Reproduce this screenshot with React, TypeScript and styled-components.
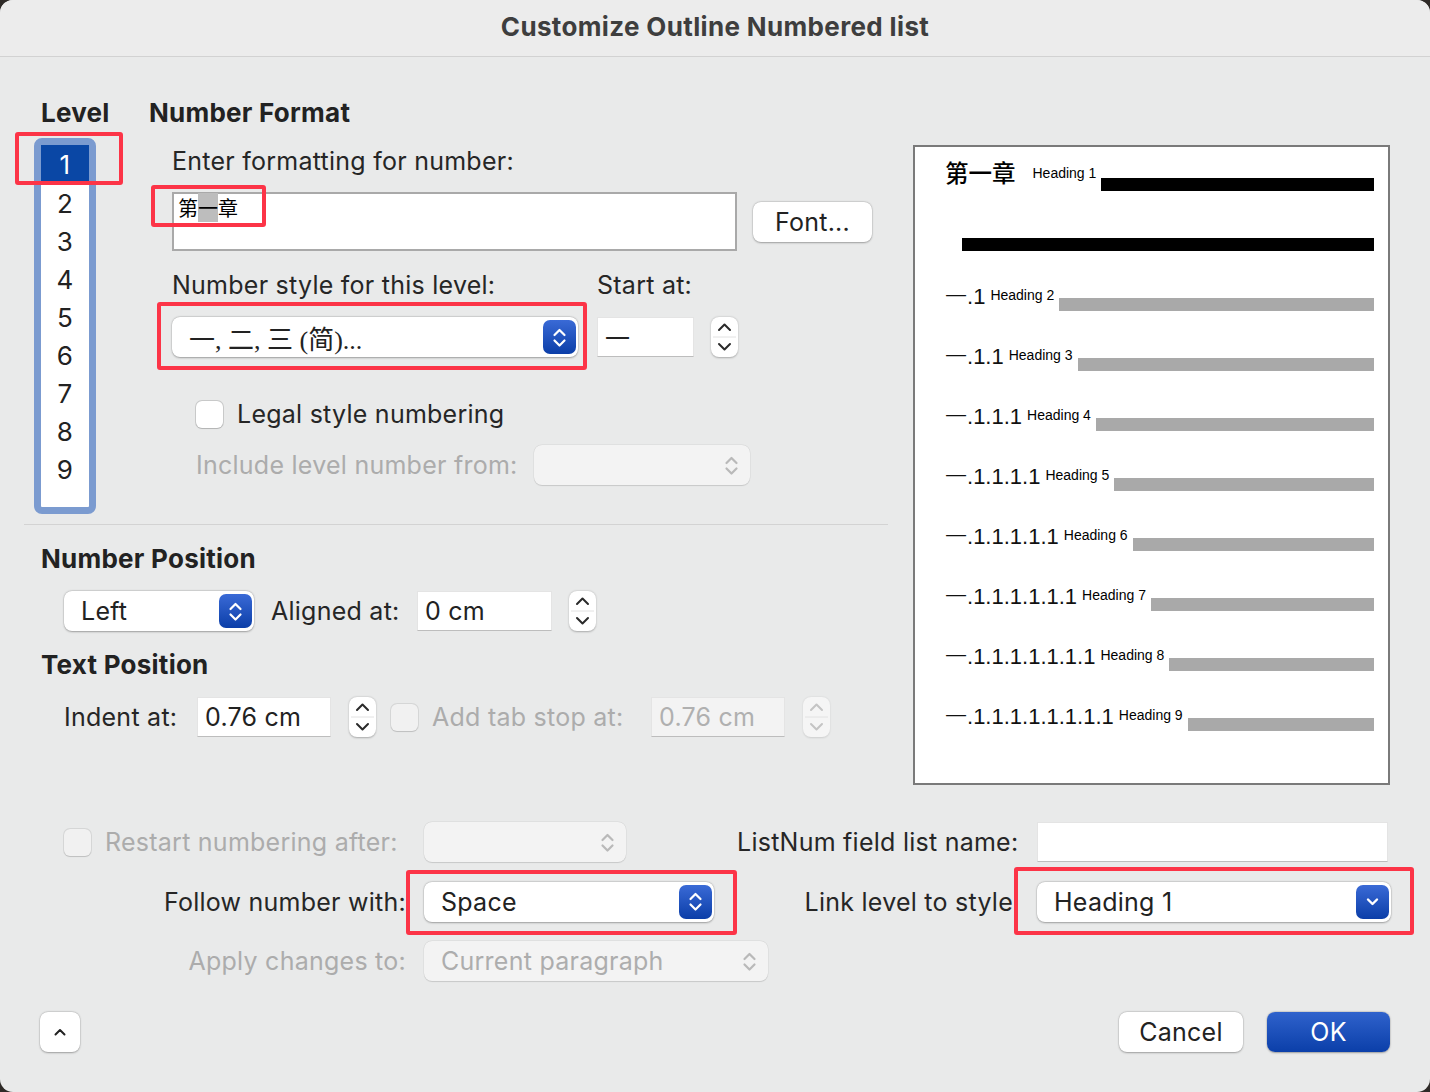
import React from 'react';
import styled, { createGlobalStyle, css } from 'styled-components';

const GlobalStyle = createGlobalStyle`
  html, body {
    margin: 0;
    padding: 0;
    background: #2e2a27;
  }
  body {
    font-family: Inter, "Noto Sans CJK SC", sans-serif;
    letter-spacing: 0.25px;
    color: #262626;
  }
  * {
    box-sizing: border-box;
  }
`;

const levels = [1, 2, 3, 4, 5, 6, 7, 8, 9];

const previewRows = [2, 3, 4, 5, 6, 7, 8, 9].map(n => ({
  level: n,
  number: '一' + '.1'.repeat(n - 1),
}));

const annotations = [
  { x: 15, y: 132, w: 108, h: 53 },
  { x: 151, y: 185, w: 115, h: 42 },
  { x: 157, y: 302, w: 430, h: 68 },
  { x: 406, y: 870, w: 331, h: 65 },
  { x: 1014, y: 867, w: 400, h: 68 },
];

const UpDown: React.FC<{ color: string; }> = ({ color }) => (
  <svg width='33' height='33' viewBox='0 0 33 33'>
    <polyline points='11.5,14 16.5,9 21.5,14' fill='none' stroke={color} strokeWidth='2.2' strokeLinecap='round' strokeLinejoin='round' />
    <polyline points='11.5,19.5 16.5,24.5 21.5,19.5' fill='none' stroke={color} strokeWidth='2.2' strokeLinecap='round' strokeLinejoin='round' />
  </svg>
);

const Down: React.FC = () => (
  <svg width='33' height='33' viewBox='0 0 33 33'>
    <polyline points='12,14.5 16.5,19 21,14.5' fill='none' stroke='#fff' strokeWidth='2.4' strokeLinecap='round' strokeLinejoin='round' />
  </svg>
);

const StepArrows: React.FC<{ disabled?: boolean; }> = ({ disabled }) => {
  const color = disabled ? '#c4c4c4' : '#2a2a2a';
  return (
    <svg width='27' height='40' viewBox='0 0 27 40'>
      <polyline points='8,13 13.5,7.5 19,13' fill='none' stroke={color} strokeWidth='2' strokeLinecap='round' strokeLinejoin='round' />
      <line x1='2' y1='20' x2='25' y2='20' stroke='#e2e2e2' strokeWidth='1' />
      <polyline points='8,27 13.5,32.5 19,27' fill='none' stroke={color} strokeWidth='2' strokeLinecap='round' strokeLinejoin='round' />
    </svg>
  );
};

type SelectProps = {
  width: number;
  value?: string;
  disabled?: boolean;
  kind?: 'updown' | 'down';
  serif?: boolean;
};

const Select: React.FC<SelectProps> = ({ width, value, disabled, kind = 'updown', serif }) => (
  <SelectBox $width={width} $disabled={disabled}>
    <SelectText $serif={serif}>{value}</SelectText>
    {disabled ?
      <PlainIcon><UpDown color='#b9b9b9' /></PlainIcon> :
      <BlueIcon>{kind === 'down' ? <Down /> : <UpDown color='#fff' />}</BlueIcon>}
  </SelectBox>
);

export default function App() {
  return (
    <>
      <GlobalStyle />
      <Window>
        <TitleBar>Customize Outline Numbered list</TitleBar>
        <Body>
          <TopSection>
            <LeftColumn>
              <LevelFormatRow>
                <LevelColumn>
                  <LevelHeading>Level</LevelHeading>
                  <LevelList>
                    {levels.map(l => (
                      <LevelItem key={l} $selected={l === 1}>{l}</LevelItem>
                    ))}
                  </LevelList>
                </LevelColumn>
                <FormatColumn>
                  <SectionHeading>Number Format</SectionHeading>
                  <Indented>
                    <FieldLabel $top={16}>Enter formatting for number:</FieldLabel>
                    <FormatRow>
                      <FormatBox>
                        <FormatText>第<Highlight>一</Highlight>章</FormatText>
                      </FormatBox>
                      <PushButton>Font...</PushButton>
                    </FormatRow>
                    <StyleGrid>
                      <FieldLabel>Number style for this level:</FieldLabel>
                      <FieldLabel>Start at:</FieldLabel>
                      <span />
                      <Select width={406} value='一, 二, 三 (简)...' serif />
                      <TextField $width={97}><CjkValue>一</CjkValue></TextField>
                      <Stepper><StepArrows /></Stepper>
                    </StyleGrid>
                    <SubIndent>
                      <CheckRow $top={41}>
                        <Checkbox />
                        <span>Legal style numbering</span>
                      </CheckRow>
                      <ControlRow $top={15}>
                        <RowLabel $width={338} $disabled>Include level number from:</RowLabel>
                        <Select width={216} disabled />
                      </ControlRow>
                    </SubIndent>
                  </Indented>
                </FormatColumn>
              </LevelFormatRow>
              <Divider />
              <PositionSection>
                <SectionHeading $top={18}>Number Position</SectionHeading>
                <PositionRow>
                  <Select width={190} value='Left' />
                  <RowLabel $width={163} $pad={17}>Aligned at:</RowLabel>
                  <TextField $width={135}>0 cm</TextField>
                  <Stepper $gap={17}><StepArrows /></Stepper>
                </PositionRow>
                <SectionHeading $top={18}>Text Position</SectionHeading>
                <PositionRow>
                  <RowLabel $width={133}>Indent at:</RowLabel>
                  <TextField $width={134}>0.76 cm</TextField>
                  <Stepper $gap={18}><StepArrows /></Stepper>
                  <CheckRow $gap={15}>
                    <Checkbox $disabled />
                  </CheckRow>
                  <RowLabel $width={233} $pad={14} $disabled>Add tab stop at:</RowLabel>
                  <TextField $width={134} $disabled>0.76 cm</TextField>
                  <Stepper $gap={18} $disabled><StepArrows disabled /></Stepper>
                </PositionRow>
              </PositionSection>
            </LeftColumn>
            <Preview>
              <PreviewRow $first>
                <ChapterNumber>第一章</ChapterNumber>
                <PreviewLabel $gap={17}>Heading 1</PreviewLabel>
                <PreviewBar $dark $top={19} />
              </PreviewRow>
              <WideBar />
              {previewRows.map(r => (
                <PreviewRow key={r.level}>
                  <PreviewNumber>
                    <CjkValue>一</CjkValue>{r.number.slice(1)}
                  </PreviewNumber>
                  <PreviewLabel $gap={5}>Heading {r.level}</PreviewLabel>
                  <PreviewBar $top={17} />
                </PreviewRow>
              ))}
            </Preview>
          </TopSection>

          <BottomGrid>
            <LeftCell>
              <Checkbox $disabled />
              <DisabledText>Restart numbering after:</DisabledText>
            </LeftCell>
            <Select width={202} disabled />
            <span>ListNum field list name:</span>
            <TextField $width={351} />

            <LabelCell>Follow number with:</LabelCell>
            <Select width={290} value='Space' />
            <RightLabelCell>Link level to style</RightLabelCell>
            <Select width={354} value='Heading 1' kind='down' />

            <LabelCell $disabled>Apply changes to:</LabelCell>
            <Select width={344} value='Current paragraph' disabled />
          </BottomGrid>

          <Footer>
            <PushButton $width={40}>
              <svg width='14' height='10' viewBox='0 0 14 10'>
                <polyline points='2.5,7.5 7,3 11.5,7.5' fill='none' stroke='#222' strokeWidth='2' strokeLinecap='round' strokeLinejoin='round' />
              </svg>
            </PushButton>
            <FooterActions>
              <PushButton $width={124}>Cancel</PushButton>
              <PushButton $width={123} $primary>OK</PushButton>
            </FooterActions>
          </Footer>
        </Body>

        {annotations.map((a, i) => (
          <Annotation key={i} $x={a.x} $y={a.y} $w={a.w} $h={a.h} />
        ))}
      </Window>
    </>
  );
}

const Window = styled.div`
  position: relative;
  width: 1430px;
  height: 1092px;
  background: #e9eaea;
  border-radius: 13px;
  overflow: hidden;
`;

const TitleBar = styled.div`
  height: 57px;
  background: #ececec;
  border-bottom: 1px solid #d2d2d2;
  display: flex;
  align-items: center;
  justify-content: center;
  padding-bottom: 3px;
  font-size: 26px;
  font-weight: 700;
  letter-spacing: 0.35px;
  color: #3e3e3e;
`;

const Body = styled.div`
  padding: 0 40px 0 24px;
`;

const TopSection = styled.div`
  display: flex;
  align-items: flex-start;
`;

const LeftColumn = styled.div`
  width: 864px;
`;

const LevelFormatRow = styled.div`
  display: flex;
  padding-top: 40px;
  height: 457px;
`;

const LevelColumn = styled.div`
  margin-left: 10px;
  width: 62px;
`;

const SectionHeading = styled.div<{ $top?: number; }>`
  font-size: 26px;
  line-height: 32px;
  font-weight: 700;
  color: #222;
  margin-top: ${p => p.$top || 0}px;
`;

const LevelHeading = styled(SectionHeading)`
  margin-left: 7px;
`;

const LevelList = styled.div`
  margin-top: 9px;
  width: 62px;
  height: 376px;
  border: 7px solid #7b9bd0;
  border-radius: 8px;
  background: #fff;
`;

const LevelItem = styled.div<{ $selected?: boolean; }>`
  height: 38px;
  display: flex;
  align-items: center;
  justify-content: center;
  padding-top: 2px;
  font-size: 26px;
  color: ${p => p.$selected ? '#fff' : '#222'};
  background: ${p => p.$selected ? '#0a47a5' : 'transparent'};
  ${p => p.$selected && css`
    height: 36px;
    margin-bottom: 2px;
  `}
`;

const FormatColumn = styled.div`
  margin-left: 53px;
  flex: 1;
`;

const Indented = styled.div`
  padding-left: 23px;
`;

const SubIndent = styled.div`
  padding-left: 24px;
`;

const FieldLabel = styled.div<{ $top?: number; }>`
  font-size: 25px;
  line-height: 32px;
  margin-top: ${p => p.$top || 0}px;
`;

const FormatRow = styled.div`
  display: flex;
  align-items: flex-start;
  margin-top: 15px;
`;

const FormatBox = styled.div`
  width: 565px;
  height: 59px;
  background: #fff;
  border: 2px solid #a9a9a9;
  padding-left: 4px;
`;

const FormatText = styled.div`
  font-family: "Noto Sans CJK SC", sans-serif;
  font-size: 20px;
  line-height: 27px;
  letter-spacing: 0;
  color: #000;
`;

const Highlight = styled.span`
  background: #bdbdbd;
`;

const PushButton = styled.div<{ $width?: number; $primary?: boolean; }>`
  width: ${p => p.$width || 119}px;
  height: 40px;
  margin: 10px 0 0 16px;
  display: flex;
  align-items: center;
  justify-content: center;
  border-radius: 8px;
  font-size: 25px;
  color: #222;
  background: #fff;
  box-shadow: 0 0.5px 2px rgba(0, 0, 0, 0.3), 0 0 0 0.5px rgba(0, 0, 0, 0.08);

  ${p => p.$primary && css`
    color: #fff;
    background: linear-gradient(#2f62cc, #0b3fa9);
  `}
`;

const StyleGrid = styled.div`
  display: grid;
  grid-template-columns: 425px 114px 27px;
  row-gap: 16px;
  margin-top: 18px;
  justify-items: start;
`;

const SelectBox = styled.div<{ $width: number; $disabled?: boolean; }>`
  width: ${p => p.$width}px;
  height: 40px;
  display: flex;
  align-items: center;
  justify-content: space-between;
  padding: 0 2px 0 17px;
  border-radius: 8px;
  background: ${p => p.$disabled ? '#f3f3f3' : '#fff'};
  box-shadow: ${p => p.$disabled
    ? '0 0 0 0.5px rgba(0, 0, 0, 0.06), 0 0.5px 1px rgba(0, 0, 0, 0.12)'
    : '0 0.5px 2px rgba(0, 0, 0, 0.3), 0 0 0 0.5px rgba(0, 0, 0, 0.08)'};
  font-size: 25px;
  color: ${p => p.$disabled ? '#adadad' : '#222'};
`;

const SelectText = styled.span<{ $serif?: boolean; }>`
  white-space: nowrap;
  ${p => p.$serif && css`
    font-family: "Liberation Serif", "Noto Sans CJK SC", serif;
    font-size: 26px;
    letter-spacing: 0;
  `}
`;

const BlueIcon = styled.div`
  width: 33px;
  height: 34px;
  border-radius: 7px;
  background: linear-gradient(#3a6ad6, #0b3ea8);
  display: flex;
  align-items: center;
  justify-content: center;
`;

const PlainIcon = styled.div`
  width: 33px;
  height: 34px;
  display: flex;
  align-items: center;
  justify-content: center;
`;

const TextField = styled.div<{ $width: number; $disabled?: boolean; }>`
  width: ${p => p.$width}px;
  height: 40px;
  display: flex;
  align-items: center;
  padding-left: 7px;
  background: ${p => p.$disabled ? '#f3f3f3' : '#fff'};
  border: 1px solid #e4e4e4;
  border-bottom: 1px solid #bdbdbd;
  font-size: 25px;
  color: ${p => p.$disabled ? '#b0b0b0' : '#222'};
`;

const CjkValue = styled.span`
  font-family: "Noto Sans CJK SC", sans-serif;
  letter-spacing: 0;
`;

const Stepper = styled.div<{ $gap?: number; $disabled?: boolean; }>`
  width: 27px;
  height: 40px;
  margin-left: ${p => p.$gap || 0}px;
  border-radius: 8px;
  background: ${p => p.$disabled ? '#f5f5f5' : '#fff'};
  box-shadow: 0 0.5px 2px rgba(0, 0, 0, ${p => p.$disabled ? 0.12 : 0.28});
  display: flex;
`;

const CheckRow = styled.div<{ $top?: number; $gap?: number; }>`
  display: flex;
  align-items: center;
  gap: 14px;
  height: 32px;
  margin-top: ${p => p.$top || 0}px;
  margin-left: ${p => p.$gap || 0}px;
  font-size: 25px;
`;

const Checkbox = styled.div<{ $disabled?: boolean; }>`
  width: 27px;
  height: 27px;
  border-radius: 6px;
  background: ${p => p.$disabled ? '#f1f1f1' : '#fff'};
  box-shadow: 0 0 0 1px rgba(0, 0, 0, ${p => p.$disabled ? 0.07 : 0.13}), 0 0.5px 1px rgba(0, 0, 0, 0.12);
`;

const ControlRow = styled.div<{ $top?: number; }>`
  display: flex;
  align-items: center;
  margin-top: ${p => p.$top || 0}px;
`;

const RowLabel = styled.span<{ $width: number; $pad?: number; $disabled?: boolean; }>`
  width: ${p => p.$width}px;
  padding-left: ${p => p.$pad || 0}px;
  flex-shrink: 0;
  font-size: 25px;
  white-space: nowrap;
  color: ${p => p.$disabled ? '#acacac' : '#262626'};
`;

const Divider = styled.div`
  margin-top: 10px;
  height: 1px;
  background: #d3d3d3;
`;

const PositionSection = styled.div`
  padding-left: 17px;
`;

const PositionRow = styled.div`
  display: flex;
  align-items: center;
  margin-top: 16px;
  padding-left: 23px;
  height: 40px;
`;

const Preview = styled.div`
  margin: 88px 0 0 25px;
  width: 477px;
  height: 640px;
  background: #fff;
  border: 2px solid #7a7a7a;
  padding: 12px 14px 0 30px;
  color: #000;
  letter-spacing: 0;
`;

const PreviewRow = styled.div<{ $first?: boolean; }>`
  display: flex;
  align-items: flex-start;
  height: ${p => p.$first ? 32 : 60}px;
`;

const ChapterNumber = styled.span`
  font-family: "Noto Sans CJK SC", sans-serif;
  font-size: 23.5px;
  line-height: 26px;
  font-weight: 500;
  white-space: nowrap;
`;

const PreviewNumber = styled.span`
  font-family: "Liberation Sans", "Noto Sans CJK SC", sans-serif;
  font-size: 22px;
  line-height: 26px;
  font-weight: 300;
  color: #111;
  white-space: nowrap;
`;

const PreviewLabel = styled.span<{ $gap: number; }>`
  font-family: "Liberation Sans", sans-serif;
  font-size: 14px;
  line-height: 28px;
  margin: 0 5px 0 ${p => p.$gap}px;
  white-space: nowrap;
`;

const PreviewBar = styled.div<{ $dark?: boolean; $top: number; }>`
  flex: 1;
  height: 13px;
  margin-top: ${p => p.$top}px;
  background: ${p => p.$dark ? '#000' : '#a9a9a9'};
`;

const WideBar = styled.div`
  margin: 47px 0 30px 17px;
  height: 13px;
  background: #000;
`;

const BottomGrid = styled.div`
  display: grid;
  grid-template-columns: 360px 313px 300px 1fr;
  grid-auto-rows: 40px;
  row-gap: 19.5px;
  align-items: center;
  justify-items: start;
  margin-top: 37px;
  padding-left: 40px;
  font-size: 25px;
`;

const LeftCell = styled.div`
  display: flex;
  align-items: center;
  gap: 14px;
`;

const DisabledText = styled.span`
  color: #acacac;
`;

const LabelCell = styled.span<{ $disabled?: boolean; }>`
  justify-self: end;
  padding-right: 18px;
  white-space: nowrap;
  color: ${p => p.$disabled ? '#acacac' : '#262626'};
`;

const RightLabelCell = styled.span`
  justify-self: end;
  padding-right: 24px;
  white-space: nowrap;
`;

const Footer = styled.div`
  display: flex;
  justify-content: space-between;
  margin-top: 21px;

  & > ${PushButton} {
    margin-left: 16px;
  }
`;

const FooterActions = styled.div`
  display: flex;

  & > ${PushButton} {
    margin-left: 24px;
  }
`;

const Annotation = styled.div<{ $x: number; $y: number; $w: number; $h: number; }>`
  position: absolute;
  left: ${p => p.$x}px;
  top: ${p => p.$y}px;
  width: ${p => p.$w}px;
  height: ${p => p.$h}px;
  border: 4px solid #fc3447;
  border-radius: 3px;
  pointer-events: none;
`;
